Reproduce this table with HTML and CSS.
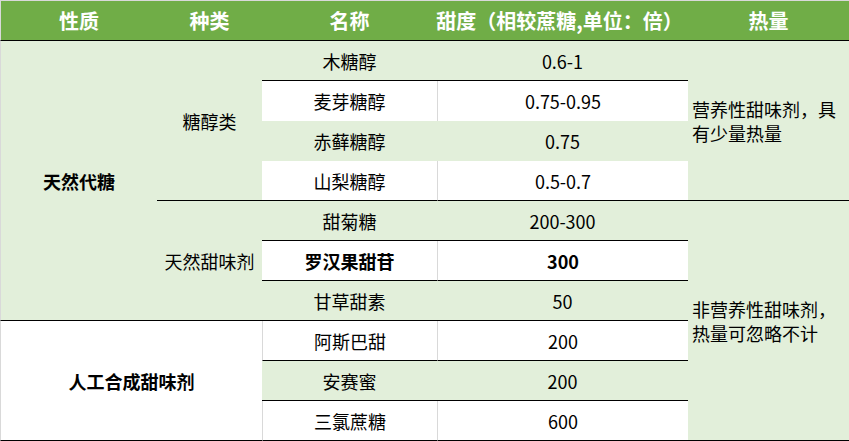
FILE: index.html
```html
<!DOCTYPE html>
<html lang="zh">
<head>
<meta charset="utf-8">
<link rel="stylesheet" href="styles.css">
</head>
<body>
<div class="table">
  <div class="cell hd first">性质</div>
  <div class="cell hd">种类</div>
  <div class="cell hd">名称</div>
  <div class="cell hd wide">甜度（相较蔗糖,单位：倍）</div>
  <div class="cell hd">热量</div>

  <div class="cell g b first r7 strong">天然代糖</div>
  <div class="cell g b r4">糖醇类</div>
  <div class="cell g b">木糖醇</div>
  <div class="cell g b">0.6-1</div>
  <div class="cell g b r4 note">营养性甜味剂，具有少量热量</div>

  <div class="cell w">麦芽糖醇</div>
  <div class="cell w gl">0.75-0.95</div>

  <div class="cell g">赤藓糖醇</div>
  <div class="cell g">0.75</div>

  <div class="cell w b">山梨糖醇</div>
  <div class="cell w b gl">0.5-0.7</div>

  <div class="cell g b r3">天然甜味剂</div>
  <div class="cell g b">甜菊糖</div>
  <div class="cell g b">200-300</div>
  <div class="cell g b r6 note">非营养性甜味剂，热量可忽略不计</div>

  <div class="cell w b strong">罗汉果甜苷</div>
  <div class="cell w b gl strong">300</div>

  <div class="cell g b">甘草甜素</div>
  <div class="cell g b">50</div>

  <div class="cell w b first c2 r3 strong">人工合成甜味剂</div>
  <div class="cell w b gl">阿斯巴甜</div>
  <div class="cell w b gl">200</div>

  <div class="cell g b">安赛蜜</div>
  <div class="cell g b">200</div>

  <div class="cell w b gl">三氯蔗糖</div>
  <div class="cell w b gl">600</div>
</div>
</body>
</html>
```

FILE: styles.css
```css
html, body {
  margin: 0;
  padding: 0;
  background: #ffffff;
}

.table {
  display: grid;
  grid-template-columns: 157px 105px 175px 251px 161px;
  grid-template-rows: 41px repeat(10, 40px);
  width: 849px;
  font-family: "Noto Sans CJK SC", "Noto Sans", sans-serif;
  font-size: 18px;
  color: #000000;
}

.cell {
  box-sizing: border-box;
  display: flex;
  align-items: center;
  justify-content: center;
  white-space: nowrap;
  line-height: 24px;
}

.hd {
  background: #70ad47;
  color: #ffffff;
  font-weight: 700;
  font-size: 20px;
  border-top: 1px solid #d9d9d9;
  border-bottom: 1px solid #000000;
}

.wide {
  padding-right: 6px;
}

.g {
  background: #e2efda;
}

.w {
  background: #ffffff;
}

.b {
  border-bottom: 1px solid #000000;
}

.first {
  border-left: 1px solid #d9d9d9;
}

.gl {
  border-left: 1px solid #d9d9d9;
}

.strong {
  font-weight: 700;
}

.r3 { grid-row: span 3; }
.r4 { grid-row: span 4; }
.r6 { grid-row: span 6; }
.r7 { grid-row: span 7; }
.c2 { grid-column: span 2; }

.note {
  justify-content: flex-start;
  white-space: normal;
  padding: 0 3px 0 4px;
}
```
